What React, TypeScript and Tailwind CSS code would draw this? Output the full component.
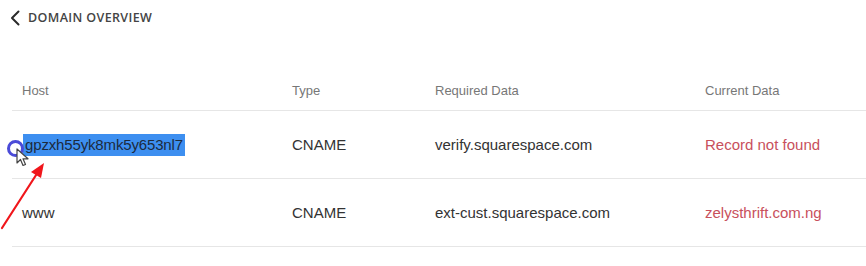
interface DnsRecord {
  host: string;
  type: string;
  required: string;
  current: string;
  selected?: boolean;
}

const records: DnsRecord[] = [
  {
    host: 'gpzxh55yk8mk5y653nl7',
    type: 'CNAME',
    required: 'verify.squarespace.com',
    current: 'Record not found',
    selected: true,
  },
  {
    host: 'www',
    type: 'CNAME',
    required: 'ext-cust.squarespace.com',
    current: 'zelysthrift.com.ng',
  },
];

const cols = 'grid grid-cols-[270px_143px_270px_1fr] pl-[10px]';

export default function App() {
  return (
    <div className="relative w-[866px] h-[266px] overflow-hidden bg-white font-['Liberation_Sans',Arial,sans-serif]">
      {/* Back link */}
      <div className="flex items-center h-[36px] pl-[10px] gap-[8px]">
        <svg width="10" height="16" viewBox="0 0 10 16">
          <polyline points="8.5,1.5 2,8 8.5,14.5" fill="none" stroke="#2a2a2a" strokeWidth="2" strokeLinecap="round" strokeLinejoin="round" />
        </svg>
        <span className="font-['Open_Sans',sans-serif] text-[12.5px] font-semibold tracking-[0.03em] text-[#444]">
          DOMAIN OVERVIEW
        </span>
      </div>

      {/* Records table */}
      <div className="pl-[12px] mt-[45px]">
        <div className={`${cols} h-[30px] border-b border-[#e6e6e6] text-[13px] text-[#777]`}>
          <div>Host</div>
          <div>Type</div>
          <div>Required Data</div>
          <div>Current Data</div>
        </div>
        {records.map((r) => (
          <div
            key={r.host}
            className={`${cols} h-[68px] items-center pt-[2px] border-b border-[#e6e6e6] text-[15px] text-[#333]`}
          >
            <div>
              {r.selected ? (
                <span className="inline-block ml-[1px] pl-[2px] pr-[2px] leading-[22px] bg-[#3d8ff0] text-[#1c2a3d] tracking-[-0.01em]">
                  {r.host}
                </span>
              ) : (
                r.host
              )}
            </div>
            <div>{r.type}</div>
            <div>{r.required}</div>
            <div className="text-[#c8505c]">{r.current}</div>
          </div>
        ))}
      </div>

      {/* Click ring + pointer */}
      <div className="absolute left-[7px] top-[140px] w-[17px] h-[17px] rounded-full border-[3px] border-[#4b4bd8]" />
      <svg className="absolute left-[16px] top-[148px]" width="14" height="20" viewBox="0 0 14 20">
        <path d="M1 1 L1 15 L4.5 11.5 L7 17.5 L9.5 16.5 L7 10.8 L12 10.8 Z" fill="#fff" stroke="#444" strokeWidth="1.2" strokeLinejoin="round" />
      </svg>

      {/* Red annotation arrow */}
      <svg className="absolute left-0 top-[160px]" width="60" height="80" viewBox="0 0 60 80">
        <line x1="2" y1="68" x2="38" y2="12" stroke="#f0161b" strokeWidth="2.2" strokeLinecap="round" />
        <path d="M44 3 L31 12 L41 18 Z" fill="#f0161b" />
      </svg>
    </div>
  );
}
